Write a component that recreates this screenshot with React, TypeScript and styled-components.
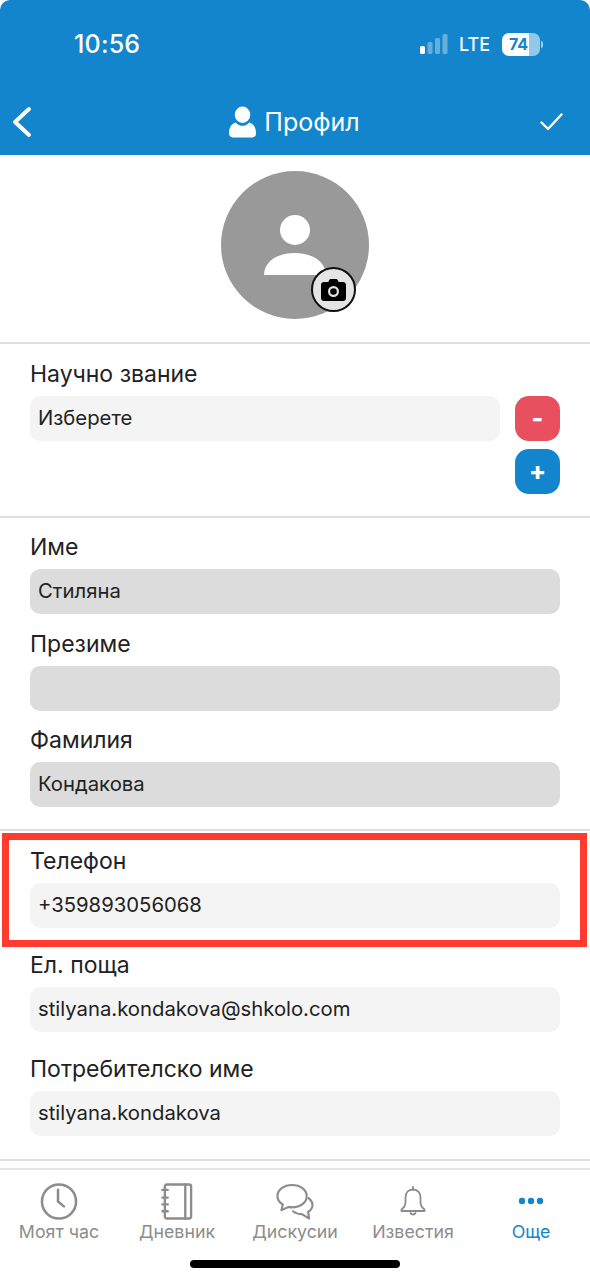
import React from "react";
import styled, { createGlobalStyle } from "styled-components";

const GlobalStyle = createGlobalStyle`
  html, body {
    margin: 0;
    padding: 0;
    background: #fff;
  }

  * {
    box-sizing: border-box;
  }
`;

const Page = styled.div`
  width: 590px;
  height: 1280px;
  overflow: hidden;
  display: flex;
  flex-direction: column;
  background: #fff;
  font-family: Inter, "Liberation Sans", sans-serif;
  color: #222;
`;

const Header = styled.header`
  height: 155px;
  flex: none;
  background: #1385cc;
  border-radius: 10px 10px 0 0;
  color: #fff;
`;

const StatusBar = styled.div`
  height: 88px;
  padding: 0 50px 0 74px;
  display: flex;
  align-items: center;
  justify-content: space-between;
`;

const Time = styled.span`
  font-size: 25px;
  font-weight: 500;
  letter-spacing: 0.2px;
`;

const StatusRight = styled.div`
  display: flex;
  align-items: center;
`;

const Lte = styled.span`
  margin: 0 12px 0 11px;
  font-size: 18px;
  font-weight: 500;
`;

const Battery = styled.div`
  position: relative;
  width: 38px;
  height: 23px;
  padding-right: 5px;
  border-radius: 7px;
  background: linear-gradient(90deg, #fff 72%, rgba(255, 255, 255, 0.55) 72%);
  color: #1385cc;
  font-size: 16px;
  font-weight: 700;
  line-height: 23px;
  text-align: center;

  &::after {
    content: "";
    position: absolute;
    top: 8px;
    right: -3px;
    width: 2px;
    height: 7px;
    border-radius: 0 2px 2px 0;
    background: rgba(255, 255, 255, 0.6);
  }
`;

const NavBar = styled.div`
  height: 67px;
  padding: 0 27px 0 11px;
  display: flex;
  align-items: center;
  justify-content: space-between;
`;

const NavTitle = styled.div`
  display: flex;
  align-items: center;
  gap: 8px;
  font-size: 25px;
  margin-left: 16px;
`;

const AvatarSection = styled.div`
  height: 189px;
  flex: none;
  padding-top: 16px;
  display: flex;
  justify-content: center;
  border-bottom: 2px solid #dfdfdf;
`;

const Avatar = styled.div`
  position: relative;
  width: 148px;
  height: 148px;
  border-radius: 50%;
  background: #999;
  display: flex;
  align-items: center;
  justify-content: center;
`;

const CameraBadge = styled.div`
  position: absolute;
  left: 90px;
  top: 96px;
  width: 45px;
  height: 45px;
  border-radius: 50%;
  border: 2px solid #111;
  background: #e4e4e4;
  display: flex;
  align-items: center;
  justify-content: center;
`;

const Section = styled.section<{ $gap: number; $bottom: number; $top: number }>`
  position: relative;
  flex: none;
  padding: ${(p) => p.$top}px 30px ${(p) => p.$bottom}px;
  display: flex;
  flex-direction: column;
  gap: ${(p) => p.$gap}px;
  border-bottom: 2px solid #dfdfdf;
`;

const Field = styled.div`
  display: flex;
  flex-direction: column;
`;

const Label = styled.label`
  height: 30px;
  margin-bottom: 7px;
  font-size: 23px;
  line-height: 30px;
  color: #222;
`;

const Input = styled.div<{ $disabled?: boolean }>`
  height: 45px;
  padding: 0 8px;
  border-radius: 10px;
  background: ${(p) => (p.$disabled ? "#dcdcdc" : "#f4f4f4")};
  font-size: 20.3px;
  line-height: 43px;
  color: #222;
`;

const SelectRow = styled.div`
  display: flex;
  gap: 15px;
`;

const Grow = styled.div`
  flex: 1;
`;

const ButtonColumn = styled.div`
  display: flex;
  flex-direction: column;
  gap: 8px;
`;

const SquareButton = styled.button<{ $color: string }>`
  width: 45px;
  height: 45px;
  padding: 0;
  border: 0;
  border-radius: 14px;
  background: ${(p) => p.$color};
  color: #fff;
  font-family: Inter, sans-serif;
  font-size: 25px;
  font-weight: 800;
  line-height: 45px;
`;

const Highlight = styled.div`
  position: absolute;
  left: 2px;
  right: 3px;
  top: 2px;
  height: 114px;
  border: 7px solid #ff3b30;
  pointer-events: none;
`;

const TabBar = styled.nav`
  margin-top: 7px;
  flex: 1;
  position: relative;
  display: grid;
  grid-template-columns: repeat(5, 1fr);
  align-items: start;
  border-top: 2px solid #e6e6e6;
`;

const Tab = styled.div<{ $active?: boolean }>`
  height: 74px;
  padding-top: 13px;
  display: flex;
  flex-direction: column;
  align-items: center;
  justify-content: space-between;
  font-size: 17.8px;
  line-height: 24px;
  color: ${(p) => (p.$active ? "#1385cc" : "#8c8c8c")};
`;

const HomeIndicator = styled.div`
  position: absolute;
  left: 190px;
  bottom: 12px;
  width: 210px;
  height: 8px;
  border-radius: 4px;
  background: #000;
`;

const Signal = () => (
  <svg width="28" height="20" viewBox="0 0 28 20">
    <rect x="0" y="12" width="5" height="8" rx="1.5" fill="#fff" />
    <g fill="#fff" opacity="0.35">
      <rect x="7.5" y="8" width="5" height="12" rx="1.5" />
      <rect x="15" y="4" width="5" height="16" rx="1.5" />
      <rect x="22.5" y="0" width="5" height="20" rx="1.5" />
    </g>
  </svg>
);

const Back = () => (
  <svg width="22" height="32" viewBox="0 0 22 32" fill="none" stroke="#fff" strokeWidth="4" strokeLinecap="round" strokeLinejoin="round">
    <path d="M18 3 L4 16 L18 29" />
  </svg>
);

const Check = () => (
  <svg width="23" height="18" viewBox="0 0 23 18" fill="none" stroke="#fff" strokeWidth="2.4" strokeLinecap="round" strokeLinejoin="round">
    <path d="M1.5 9.5 L8 16 L21.5 1.5" />
  </svg>
);

const NavUser = () => (
  <svg width="27" height="32" viewBox="0 0 28 32" fill="#fff">
    <ellipse cx="14" cy="8.5" rx="8" ry="8.5" />
    <path d="M0 28 C0 21 3 17.5 7 16.5 C9 19 11.5 20 14 20 C16.5 20 19 19 21 16.5 C25 17.5 28 21 28 28 C28 30.5 26.5 32 24 32 L4 32 C1.5 32 0 30.5 0 28 Z" />
  </svg>
);

const AvatarPerson = () => (
  <svg width="62" height="60" viewBox="0 0 62 60" fill="#fff">
    <circle cx="31" cy="15" r="15" />
    <path d="M0 60 C0 46 14 38 31 38 C47 38 62 46 62 60 Z" />
  </svg>
);

const Camera = () => (
  <svg width="25" height="22" viewBox="0 0 25 22">
    <path
      fillRule="evenodd"
      fill="#000"
      d="M8 1.5 C8.3 .6 9 0 10 0 L15 0 C16 0 16.7 .6 17 1.5 L17.6 3 L22 3 C23.7 3 25 4.3 25 6 L25 19 C25 20.7 23.7 22 22 22 L3 22 C1.3 22 0 20.7 0 19 L0 6 C0 4.3 1.3 3 3 3 L7.4 3 Z M12.5 7 A5.5 5.5 0 1 0 12.5 18 A5.5 5.5 0 1 0 12.5 7 Z M12.5 9.2 A3.3 3.3 0 1 1 12.5 15.8 A3.3 3.3 0 1 1 12.5 9.2 Z"
    />
  </svg>
);

const tabIconProps = {
  fill: "none",
  stroke: "#8c8c8c",
  strokeLinecap: "round" as const,
  strokeLinejoin: "round" as const,
};

const ClockIcon = () => (
  <svg width="40" height="38" viewBox="0 0 40 38" strokeWidth="2.6" {...tabIconProps}>
    <circle cx="20" cy="19" r="17.5" />
    <path d="M19 7 L19 19 L25 24" />
  </svg>
);

const NotebookIcon = () => (
  <svg width="32" height="38" viewBox="0 0 32 38" strokeWidth="2.4" {...tabIconProps}>
    <rect x="3.5" y="1.5" width="27" height="35" rx="2" />
    <path d="M24.5 1.5 L24.5 36.5" />
    <path d="M1 7 L6.5 7 M1 15 L6.5 15 M1 22 L6.5 22 M1 29 L6.5 29" />
  </svg>
);

const ChatIcon = () => (
  <svg width="38" height="38" viewBox="0 0 38 38" strokeWidth="2.2" {...tabIconProps}>
    <path d="M16 2 C7.5 2 1 7 1 13.5 C1 17 3 20 6.5 22 L5 28 L12.5 24.5 C13.5 24.7 15 25 16 25 C24.5 25 31 20 31 13.5 C31 7 24.5 2 16 2 Z" />
    <path d="M33 15.5 C35.5 17.5 37 20 37 22.5 C37 25.5 35 28 32.5 29.5 L33.5 36.5 L26 32 C23 32 19.5 31 17 29" />
  </svg>
);

const BellIcon = () => (
  <svg width="26" height="36" viewBox="0 0 26 36" strokeWidth="1.8" {...tabIconProps}>
    <path d="M13 4 L13 6.5" />
    <path d="M13 6.5 C8 6.5 5.5 10 5.5 14.5 L5.5 19 C5.5 23 3.5 25 1.5 26.5 L1.5 28 L24.5 28 L24.5 26.5 C22.5 25 20.5 23 20.5 19 L20.5 14.5 C20.5 10 18 6.5 13 6.5 Z" />
    <path d="M10.5 30 C11.5 32 14.5 32 15.5 30" />
  </svg>
);

const DotsIcon = () => (
  <svg width="26" height="36" viewBox="0 0 26 36" fill="#1385cc">
    <circle cx="4" cy="18" r="3.2" />
    <circle cx="13" cy="18" r="3.2" />
    <circle cx="22" cy="18" r="3.2" />
  </svg>
);

const tabs = [
  { label: "Моят час", icon: <ClockIcon /> },
  { label: "Дневник", icon: <NotebookIcon /> },
  { label: "Дискусии", icon: <ChatIcon /> },
  { label: "Известия", icon: <BellIcon /> },
  { label: "Още", icon: <DotsIcon />, active: true },
];

const App: React.FC = () => {
  return (
    <Page>
      <GlobalStyle />
      <Header>
        <StatusBar>
          <Time>10:56</Time>
          <StatusRight>
            <Signal />
            <Lte>LTE</Lte>
            <Battery>74</Battery>
          </StatusRight>
        </StatusBar>
        <NavBar>
          <Back />
          <NavTitle>
            <NavUser />
            Профил
          </NavTitle>
          <Check />
        </NavBar>
      </Header>

      <AvatarSection>
        <Avatar>
          <AvatarPerson />
          <CameraBadge>
            <Camera />
          </CameraBadge>
        </Avatar>
      </AvatarSection>

      <Section $top={15} $bottom={22} $gap={0}>
        <Field>
          <Label>Научно звание</Label>
          <SelectRow>
            <Grow>
              <Input>Изберете</Input>
            </Grow>
            <ButtonColumn>
              <SquareButton $color="#e8505f">-</SquareButton>
              <SquareButton $color="#1385cc">+</SquareButton>
            </ButtonColumn>
          </SelectRow>
        </Field>
      </Section>

      <Section $top={14} $bottom={22} $gap={14.5}>
        <Field>
          <Label>Име</Label>
          <Input $disabled>Стиляна</Input>
        </Field>
        <Field>
          <Label>Презиме</Label>
          <Input $disabled />
        </Field>
        <Field>
          <Label>Фамилия</Label>
          <Input $disabled>Кондакова</Input>
        </Field>
      </Section>

      <Section $top={15} $bottom={23} $gap={22}>
        <Highlight />
        <Field>
          <Label>Телефон</Label>
          <Input>+359893056068</Input>
        </Field>
        <Field>
          <Label>Ел. поща</Label>
          <Input>stilyana.kondakova@shkolo.com</Input>
        </Field>
        <Field>
          <Label>Потребителско име</Label>
          <Input>stilyana.kondakova</Input>
        </Field>
      </Section>

      <TabBar>
        {tabs.map((tab) => (
          <Tab key={tab.label} $active={tab.active}>
            {tab.icon}
            <span>{tab.label}</span>
          </Tab>
        ))}
        <HomeIndicator />
      </TabBar>
    </Page>
  );
};

export default App;
